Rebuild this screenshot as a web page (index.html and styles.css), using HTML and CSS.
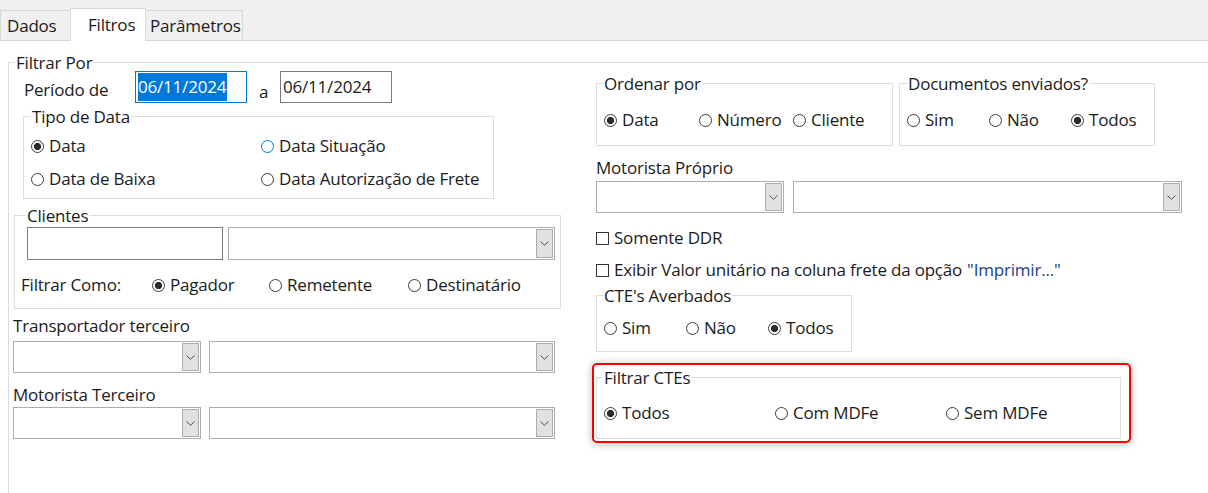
FILE: index.html
```html
<!DOCTYPE html>
<html lang="pt-BR">
<head>
<meta charset="utf-8">
<title>Filtros</title>
<link rel="stylesheet" href="styles.css">
</head>
<body>
<div class="tabs">
  <div class="tab first">Dados</div>
  <div class="tab active">Filtros</div>
  <div class="tab last">Parâmetros</div>
</div>
<div class="page">
  <div class="group outer">
    <span class="legend">Filtrar Por</span>
    <div class="columns">
      <div class="col-left">
        <div class="period-row">
          <span class="period-label">Período de</span>
          <div class="date-input focused"><span class="sel">06/11/2024</span></div>
          <span class="a-label">a</span>
          <div class="date-input"><span>06/11/2024</span></div>
        </div>

        <div class="group tipo">
          <span class="legend l7">Tipo de Data</span>
          <div class="radio-grid">
            <span class="radio checked">Data</span>
            <span class="radio hover">Data Situação</span>
            <span class="radio">Data de Baixa</span>
            <span class="radio">Data Autorização de Frete</span>
          </div>
        </div>

        <div class="group clientes">
          <span class="legend l11">Clientes</span>
          <div class="client-inputs">
            <div class="text-input"></div>
            <div class="select sel-client"><span class="btn"><svg width="9" height="5" viewBox="0 0 9 5"><polyline points="0.5,0.5 4.5,4.3 8.5,0.5" fill="none" stroke="#505050" stroke-width="1"/></svg></span></div>
          </div>
          <div class="filter-as">
            <span class="fa-label">Filtrar Como:</span>
            <span class="radio checked w117">Pagador</span>
            <span class="radio w139">Remetente</span>
            <span class="radio">Destinatário</span>
          </div>
        </div>

        <span class="field-label fl-trans">Transportador terceiro</span>
        <div class="select-row left-row">
          <div class="select sel-code"><span class="btn"><svg width="9" height="5" viewBox="0 0 9 5"><polyline points="0.5,0.5 4.5,4.3 8.5,0.5" fill="none" stroke="#505050" stroke-width="1"/></svg></span></div>
          <div class="select sel-name-left"><span class="btn"><svg width="9" height="5" viewBox="0 0 9 5"><polyline points="0.5,0.5 4.5,4.3 8.5,0.5" fill="none" stroke="#505050" stroke-width="1"/></svg></span></div>
        </div>

        <span class="field-label fl-mot">Motorista Terceiro</span>
        <div class="select-row left-row row-mot">
          <div class="select sel-code"><span class="btn"><svg width="9" height="5" viewBox="0 0 9 5"><polyline points="0.5,0.5 4.5,4.3 8.5,0.5" fill="none" stroke="#505050" stroke-width="1"/></svg></span></div>
          <div class="select sel-name-left"><span class="btn"><svg width="9" height="5" viewBox="0 0 9 5"><polyline points="0.5,0.5 4.5,4.3 8.5,0.5" fill="none" stroke="#505050" stroke-width="1"/></svg></span></div>
        </div>
      </div>

      <div class="col-right">
        <div class="row-top">
          <div class="group ordenar">
            <span class="legend">Ordenar por</span>
            <div class="radio-row">
              <span class="radio checked w95">Data</span>
              <span class="radio w94">Número</span>
              <span class="radio">Cliente</span>
            </div>
          </div>
          <div class="group docs">
            <span class="legend l7">Documentos enviados?</span>
            <div class="radio-row">
              <span class="radio w82">Sim</span>
              <span class="radio w82">Não</span>
              <span class="radio checked">Todos</span>
            </div>
          </div>
        </div>

        <span class="field-label fl-prop">Motorista Próprio</span>
        <div class="select-row right-row">
          <div class="select sel-code"><span class="btn"><svg width="9" height="5" viewBox="0 0 9 5"><polyline points="0.5,0.5 4.5,4.3 8.5,0.5" fill="none" stroke="#505050" stroke-width="1"/></svg></span></div>
          <div class="select sel-name-right"><span class="btn"><svg width="9" height="5" viewBox="0 0 9 5"><polyline points="0.5,0.5 4.5,4.3 8.5,0.5" fill="none" stroke="#505050" stroke-width="1"/></svg></span></div>
        </div>

        <span class="check ck-ddr">Somente DDR</span>
        <span class="check ck-exibir">Exibir Valor unitário na coluna frete da opção <span class="quote">"Imprimir..."</span></span>

        <div class="group averbados">
          <span class="legend">CTE's Averbados</span>
          <div class="radio-row">
            <span class="radio w82">Sim</span>
            <span class="radio w82">Não</span>
            <span class="radio checked">Todos</span>
          </div>
        </div>

        <div class="highlight">
          <div class="group ctes">
            <span class="legend">Filtrar CTEs</span>
            <div class="radio-row">
              <span class="radio checked w171">Todos</span>
              <span class="radio w171">Com MDFe</span>
              <span class="radio">Sem MDFe</span>
            </div>
          </div>
        </div>
      </div>
    </div>
  </div>
</div>
</body>
</html>
```

FILE: styles.css
```css
html, body {
  margin: 0;
  padding: 0;
}
body {
  width: 1208px;
  height: 493px;
  overflow: hidden;
  background: #ffffff;
  font-family: "Open Sans", "Noto Sans", sans-serif;
  font-size: 17px;
  line-height: 22px;
  color: #1b1b1b;
  letter-spacing: -0.2px;
}

/* ---------- tabs ---------- */
.tabs {
  display: flex;
  align-items: flex-end;
  height: 41px;
  box-sizing: border-box;
  border-bottom: 1px solid #d9d9d9;
  background: #f0f0f0;
}
.tab {
  box-sizing: border-box;
  height: 30px;
  border: 1px solid #d9d9d9;
  border-bottom: none;
  padding: 4px 0 0 6px;
  background: #f0f0f0;
  margin-left: -1px;
  white-space: nowrap;
}
.tab.first {
  margin-left: 0;
  width: 71px;
}
.tab.active {
  width: 76px;
  height: 33px;
  margin-bottom: -1px;
  padding: 5px 0 0 17px;
  background: #ffffff;
  position: relative;
  z-index: 1;
}
.tab.last {
  width: 98px;
  padding-left: 4px;
}

/* ---------- group boxes ---------- */
.page {
  padding: 21px 0 0 8px;
}
.group {
  position: relative;
  box-sizing: border-box;
  border: 1px solid #dcdcdc;
}
.legend {
  position: absolute;
  top: -11px;
  left: 6px;
  padding: 0 1px;
  background: #ffffff;
  white-space: nowrap;
}
.legend.l7 { left: 7px; }
.legend.l11 { left: 11px; }

.outer {
  width: 1200px;
  height: 431px;
  border-right: none;
  border-bottom: none;
}
.columns {
  display: flex;
}
.col-left {
  width: 587px;
  flex: none;
  display: flex;
  flex-direction: column;
  align-items: flex-start;
}
.col-right {
  display: flex;
  flex-direction: column;
  align-items: flex-start;
}

/* ---------- período ---------- */
.period-row {
  display: flex;
  align-items: flex-start;
  margin: 8px 0 0 15px;
}
.period-label {
  width: 111px;
  margin-top: 8px;
}
.date-input {
  width: 112px;
  height: 32px;
  box-sizing: border-box;
  border: 1px solid #7a7a7a;
  padding: 1px 2px;
}
.date-input span {
  display: inline-block;
  line-height: 28px;
  vertical-align: top;
}
.date-input.focused {
  border-color: #0078d7;
}
.date-input .sel {
  background: #0078d7;
  color: #ffffff;
  padding-right: 1px;
}
.a-label {
  width: 21px;
  margin: 10px 0 0 12px;
}

/* ---------- radios / checks ---------- */
.radio, .check {
  display: flex;
  align-items: center;
  gap: 5px;
  height: 22px;
  white-space: nowrap;
}
.radio::before {
  content: "";
  flex: none;
  width: 13px;
  height: 13px;
  box-sizing: border-box;
  border: 1px solid #3a3a3a;
  border-radius: 50%;
  background: #ffffff;
}
.radio.checked::before {
  background: radial-gradient(circle, #2b2b2b 0 3.3px, #ffffff 3.9px);
}
.radio.hover::before {
  border-color: #0078d7;
}
.check::before {
  content: "";
  flex: none;
  width: 13px;
  height: 13px;
  box-sizing: border-box;
  border: 1px solid #333333;
  background: #ffffff;
}
.quote {
  color: #23407e;
}
.w82 { width: 82px; }
.w94 { width: 94px; }
.w95 { width: 95px; }
.w117 { width: 117px; }
.w139 { width: 139px; }
.w171 { width: 171px; }

.radio-row {
  display: flex;
}

/* ---------- tipo de data ---------- */
.tipo {
  margin: 13px 0 0 14px;
  width: 471px;
  height: 83px;
  padding: 18px 0 0 7px;
}
.radio-grid {
  display: grid;
  grid-template-columns: 230px auto;
  row-gap: 11px;
}

/* ---------- clientes ---------- */
.clientes {
  margin: 16px 0 0 5px;
  width: 547px;
  height: 94px;
  padding: 11px 0 0 12px;
}
.client-inputs {
  display: flex;
  gap: 5px;
}
.text-input {
  width: 196px;
  height: 33px;
  box-sizing: border-box;
  border: 1px solid #7a7a7a;
}
.filter-as {
  display: flex;
  margin: 14px 0 0 -6px;
}
.fa-label {
  width: 131px;
}

/* ---------- selects ---------- */
.select {
  height: 32px;
  box-sizing: border-box;
  border: 1px solid #adadad;
  padding: 1px;
  display: flex;
  justify-content: flex-end;
  background: #ffffff;
}
.select .btn {
  width: 17px;
  box-sizing: border-box;
  border: 1px solid #adadad;
  background: #e1e1e1;
  display: flex;
  align-items: center;
  justify-content: center;
}
.select .btn svg {
  display: block;
}
.sel-client {
  width: 327px;
  height: 33px;
}
.sel-code {
  width: 188px;
}
.sel-name-left {
  width: 346px;
}
.sel-name-right {
  width: 389px;
}
.select-row {
  display: flex;
}
.left-row {
  gap: 8px;
  margin: 4px 0 0 4px;
}
.left-row.row-mot {
  margin-top: 1px;
}
.right-row {
  gap: 9px;
  margin-top: 2px;
}
.field-label {
  white-space: nowrap;
}
.fl-trans {
  margin: 6px 0 0 4px;
}
.fl-mot {
  margin: 11px 0 0 4px;
}
.fl-prop {
  margin-top: 11px;
}

/* ---------- right column ---------- */
.row-top {
  display: flex;
  gap: 6px;
  margin-top: 20px;
}
.ordenar {
  width: 297px;
  height: 63px;
  padding: 25px 0 0 7px;
}
.docs {
  width: 256px;
  height: 63px;
  padding: 25px 0 0 7px;
}
.ck-ddr {
  margin-top: 14px;
}
.ck-exibir {
  margin-top: 10px;
}
.averbados {
  margin-top: 14px;
  width: 256px;
  height: 57px;
  padding: 21px 0 0 7px;
}
.highlight {
  margin: 11px 0 0 -4px;
  width: 539px;
  height: 80px;
  box-sizing: border-box;
  border: 2px solid #ff0000;
  border-radius: 5px;
  box-shadow: 0 1px 8px rgba(0, 0, 0, 0.28);
  padding: 12px 0 0 2px;
  background: #ffffff;
}
.ctes {
  width: 525px;
  height: 62px;
  padding: 24px 0 0 7px;
}
```
